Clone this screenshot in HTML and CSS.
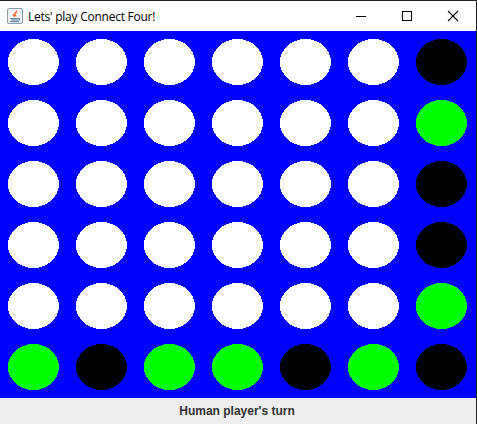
FILE: index.html
```html
<!DOCTYPE html>
<html lang="en">

<head>
    <meta charset="UTF-8" />
    <meta name="viewport" content="width=device-width, initial-scale=1.0" />
    <title>Lets' play Connect Four!</title>
    <link rel="stylesheet" href="styles.css">
</head>

<body>
    <div class="window">
        <header class="titlebar">
            <svg class="app-icon" width="16" height="16" viewBox="0 0 16 16">
                <rect x="0.5" y="0.5" width="15" height="15" rx="1.5" fill="#eef2f5" stroke="#8aa0b0" />
                <path d="M9.5 2 L10.5 4 L8.5 6 L9.5 8 L7 9 L5.5 7 L7.5 5 Z" fill="#e8772e" />
                <path d="M3.5 10.5 H10.5 M4 12 H10 M3 13.6 H12" stroke="#5a8099" fill="none" />
                <path d="M10.5 10.5 H12.5 V12 H10" stroke="#5a8099" fill="none" />
            </svg>
            <span class="title">Lets' play Connect Four!</span>
            <div class="controls">
                <svg class="control" width="46" height="30" viewBox="0 0 46 30"><path d="M18 15.5 H28" /></svg>
                <svg class="control" width="46" height="30" viewBox="0 0 46 30"><rect x="18.5" y="10.5" width="9" height="9" /></svg>
                <svg class="control" width="46" height="30" viewBox="0 0 46 30"><path class="cross" d="M18 10 L28 20 M28 10 L18 20" /></svg>
            </div>
        </header>

        <main class="board">
            <svg class="disc white"><ellipse cx="25.5" cy="23" rx="25.5" ry="23" /></svg>
            <svg class="disc white"><ellipse cx="25.5" cy="23" rx="25.5" ry="23" /></svg>
            <svg class="disc white"><ellipse cx="25.5" cy="23" rx="25.5" ry="23" /></svg>
            <svg class="disc white"><ellipse cx="25.5" cy="23" rx="25.5" ry="23" /></svg>
            <svg class="disc white"><ellipse cx="25.5" cy="23" rx="25.5" ry="23" /></svg>
            <svg class="disc white"><ellipse cx="25.5" cy="23" rx="25.5" ry="23" /></svg>
            <svg class="disc black"><ellipse cx="25.5" cy="23" rx="25.5" ry="23" /></svg>

            <svg class="disc white"><ellipse cx="25.5" cy="23" rx="25.5" ry="23" /></svg>
            <svg class="disc white"><ellipse cx="25.5" cy="23" rx="25.5" ry="23" /></svg>
            <svg class="disc white"><ellipse cx="25.5" cy="23" rx="25.5" ry="23" /></svg>
            <svg class="disc white"><ellipse cx="25.5" cy="23" rx="25.5" ry="23" /></svg>
            <svg class="disc white"><ellipse cx="25.5" cy="23" rx="25.5" ry="23" /></svg>
            <svg class="disc white"><ellipse cx="25.5" cy="23" rx="25.5" ry="23" /></svg>
            <svg class="disc green"><ellipse cx="25.5" cy="23" rx="25.5" ry="23" /></svg>

            <svg class="disc white"><ellipse cx="25.5" cy="23" rx="25.5" ry="23" /></svg>
            <svg class="disc white"><ellipse cx="25.5" cy="23" rx="25.5" ry="23" /></svg>
            <svg class="disc white"><ellipse cx="25.5" cy="23" rx="25.5" ry="23" /></svg>
            <svg class="disc white"><ellipse cx="25.5" cy="23" rx="25.5" ry="23" /></svg>
            <svg class="disc white"><ellipse cx="25.5" cy="23" rx="25.5" ry="23" /></svg>
            <svg class="disc white"><ellipse cx="25.5" cy="23" rx="25.5" ry="23" /></svg>
            <svg class="disc black"><ellipse cx="25.5" cy="23" rx="25.5" ry="23" /></svg>

            <svg class="disc white"><ellipse cx="25.5" cy="23" rx="25.5" ry="23" /></svg>
            <svg class="disc white"><ellipse cx="25.5" cy="23" rx="25.5" ry="23" /></svg>
            <svg class="disc white"><ellipse cx="25.5" cy="23" rx="25.5" ry="23" /></svg>
            <svg class="disc white"><ellipse cx="25.5" cy="23" rx="25.5" ry="23" /></svg>
            <svg class="disc white"><ellipse cx="25.5" cy="23" rx="25.5" ry="23" /></svg>
            <svg class="disc white"><ellipse cx="25.5" cy="23" rx="25.5" ry="23" /></svg>
            <svg class="disc black"><ellipse cx="25.5" cy="23" rx="25.5" ry="23" /></svg>

            <svg class="disc white"><ellipse cx="25.5" cy="23" rx="25.5" ry="23" /></svg>
            <svg class="disc white"><ellipse cx="25.5" cy="23" rx="25.5" ry="23" /></svg>
            <svg class="disc white"><ellipse cx="25.5" cy="23" rx="25.5" ry="23" /></svg>
            <svg class="disc white"><ellipse cx="25.5" cy="23" rx="25.5" ry="23" /></svg>
            <svg class="disc white"><ellipse cx="25.5" cy="23" rx="25.5" ry="23" /></svg>
            <svg class="disc white"><ellipse cx="25.5" cy="23" rx="25.5" ry="23" /></svg>
            <svg class="disc green"><ellipse cx="25.5" cy="23" rx="25.5" ry="23" /></svg>

            <svg class="disc green"><ellipse cx="25.5" cy="23" rx="25.5" ry="23" /></svg>
            <svg class="disc black"><ellipse cx="25.5" cy="23" rx="25.5" ry="23" /></svg>
            <svg class="disc green"><ellipse cx="25.5" cy="23" rx="25.5" ry="23" /></svg>
            <svg class="disc green"><ellipse cx="25.5" cy="23" rx="25.5" ry="23" /></svg>
            <svg class="disc black"><ellipse cx="25.5" cy="23" rx="25.5" ry="23" /></svg>
            <svg class="disc green"><ellipse cx="25.5" cy="23" rx="25.5" ry="23" /></svg>
            <svg class="disc black"><ellipse cx="25.5" cy="23" rx="25.5" ry="23" /></svg>
        </main>

        <footer class="status">Human player's turn</footer>
    </div>
</body>

</html>
```

FILE: styles.css
```css
html,
body {
    margin: 0;
    padding: 0;
    height: 100%;
    overflow: hidden;
    background-color: #fff;
}

.window {
    box-sizing: border-box;
    display: flex;
    flex-direction: column;
    width: 477px;
    height: 424px;
    border-top: 1px solid #202020;
    border-right: 1px solid #202020;
}

.titlebar {
    display: flex;
    align-items: center;
    height: 30px;
    padding-left: 7px;
    background-color: #fff;
    flex-shrink: 0;
}

.app-icon {
    margin-right: 5px;
}

.title {
    font-family: "Open Sans", "Noto Sans", sans-serif;
    font-size: 12px;
    letter-spacing: -0.25px;
    color: #000;
}

.controls {
    display: flex;
    margin-left: auto;
}

.control {
    display: block;
    fill: none;
    stroke: #000;
    stroke-width: 1;
}

.control .cross {
    stroke-width: 1.1;
}

.board {
    display: grid;
    grid-template-columns: repeat(7, 68px);
    grid-template-rows: repeat(6, 61px);
    height: 367px;
    padding: 8px 0 0 8px;
    box-sizing: border-box;
    background-color: #0000ff;
}

.disc {
    display: block;
    width: 51px;
    height: 46px;
    shape-rendering: crispEdges;
}

.white {
    fill: #fff;
}

.black {
    fill: #000;
}

.green {
    fill: #00ff00;
}

.status {
    flex: 1;
    display: flex;
    align-items: center;
    justify-content: center;
    padding-right: 2px;
    background-color: #eeeeee;
    color: #333;
    font-family: "Liberation Sans", Arial, sans-serif;
    font-size: 12px;
    font-weight: bold;
}
```
